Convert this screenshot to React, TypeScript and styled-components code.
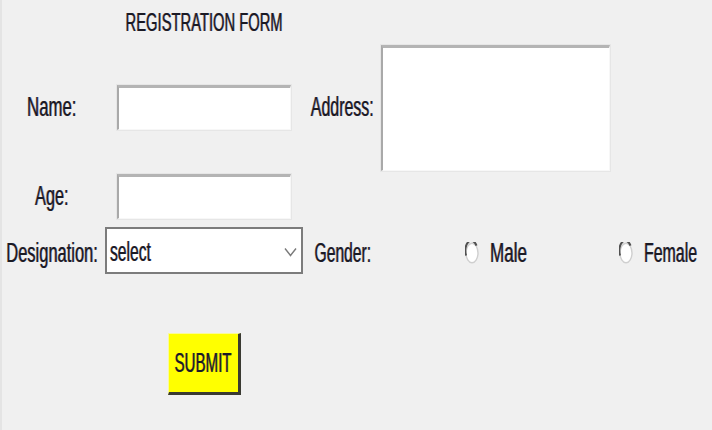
import React from "react";
import styled, { createGlobalStyle } from "styled-components";

const Global = createGlobalStyle`
  html, body { margin: 0; padding: 0; background: #f0f0f0; }
  body { font-family: "Liberation Sans", Arial, sans-serif; }
`;

const Window = styled.div`
  width: 712px;
  height: 430px;
  box-sizing: border-box;
  background: #f0f0f0;
  border-left: 2px solid #e4e4e4;
  overflow: hidden;
`;

const Form = styled.form`
  display: grid;
  margin-left: -2px;
  grid-template-columns: 104px 200px 77px 229px minmax(0, 1fr);
  grid-template-rows: 44px 127px 51px 56px 53px 66px;
`;

const Cell = styled.div<{ $col: number; $row: number; $pt?: number }>`
  grid-column: ${(p) => p.$col};
  grid-row: ${(p) => p.$row};
  display: flex;
  align-items: center;
  justify-content: center;
  min-width: 0;
  padding-top: ${(p) => p.$pt ?? 0}px;
`;

const Text = styled.span<{ $scale?: number; $size?: number; $origin?: string }>`
  display: inline-block;
  white-space: nowrap;
  font-family: "Liberation Sans", Arial, sans-serif;
  font-size: ${(p) => p.$size ?? 27}px;
  line-height: 1;
  color: #1a1a24;
  transform: scaleX(${(p) => p.$scale ?? 0.61});
  transform-origin: ${(p) => p.$origin ?? "center"};
  text-shadow: -0.9px 0 0 rgba(110, 60, 30, 0.45), 0.9px 0 0 rgba(30, 50, 140, 0.45);
`;

const Entry = styled.div<{ $w: number; $h: number }>`
  width: ${(p) => p.$w}px;
  height: ${(p) => p.$h}px;
  box-sizing: border-box;
  background: #ffffff;
  border-top: 3px solid #b4b4b4;
  border-left: 2px solid #a9a9a9;
  border-right: 1px solid #f7f7f7;
  border-bottom: 1px solid #f7f7f7;
  box-shadow: 0 0 0 1px #e6e6e6;
`;

const Combo = styled.div`
  width: 198px;
  height: 47px;
  box-sizing: border-box;
  background: #ffffff;
  border: 2px solid #7c7c7c;
  display: flex;
  align-items: center;
  justify-content: space-between;
  padding: 4px 4px 0 3px;
`;

const ComboValue = styled.div`
  flex: 1;
  overflow: visible;
`;

const RadioGroup = styled.label<{ $ml?: number }>`
  display: flex;
  align-items: center;
  gap: 11px;
  margin-left: ${(p) => p.$ml ?? 0}px;
`;

const RadioLabelBox = styled.span<{ $w: number }>`
  width: ${(p) => p.$w}px;
  display: flex;
  justify-content: flex-start;
`;

const SubmitButton = styled.button`
  width: 73px;
  height: 62px;
  box-sizing: border-box;
  background: #ffff00;
  border-top: 1px solid #fafa9a;
  border-left: 1px solid #fafa9a;
  border-right: 3px solid #3a3a32;
  border-bottom: 3px solid #3a3a32;
  padding: 0;
  display: flex;
  align-items: center;
  justify-content: center;
  cursor: pointer;
`;

const Chevron = () => (
  <svg width="13" height="10" viewBox="0 0 13 10">
    <path d="M1 1.5 L6.5 8.5 L12 1.5" fill="none" stroke="#7a7a7a" strokeWidth="1.4" />
  </svg>
);

const RadioMark = () => (
  <svg width="14" height="22" viewBox="0 0 14 22">
    <ellipse cx="7" cy="11" rx="6" ry="9.8" fill="#ffffff" stroke="#cfcfcf" strokeWidth="1.4" />
    <path d="M11.5 3.6 A6 9.8 0 0 0 1.1 13.5" fill="none" stroke="#505050" strokeWidth="2" />
  </svg>
);

export default function App() {
  return (
    <>
      <Global />
      <Window>
        <Form onSubmit={(e) => e.preventDefault()}>
          <Cell $col={2} $row={1}>
            <Text $size={25} $scale={0.59}>REGISTRATION FORM</Text>
          </Cell>

          <Cell $col={1} $row={2}>
            <Text $scale={0.62}>Name:</Text>
          </Cell>
          <Cell $col={2} $row={2}>
            <Entry $w={174} $h={45} />
          </Cell>
          <Cell $col={3} $row={2}>
            <Text $scale={0.59}>Address:</Text>
          </Cell>
          <Cell $col={4} $row={2}>
            <Entry $w={229} $h={126} />
          </Cell>

          <Cell $col={1} $row={3}>
            <Text $scale={0.6}>Age:</Text>
          </Cell>
          <Cell $col={2} $row={3}>
            <Entry $w={174} $h={45} />
          </Cell>

          <Cell $col={1} $row={4} $pt={6}>
            <Text $scale={0.61}>Designation:</Text>
          </Cell>
          <Cell $col={2} $row={4}>
            <Combo>
              <ComboValue>
                <Text $scale={0.58} $origin="left">select</Text>
              </ComboValue>
              <Chevron />
            </Combo>
          </Cell>
          <Cell $col={3} $row={4} $pt={6}>
            <Text $scale={0.58}>Gender:</Text>
          </Cell>
          <Cell $col={4} $row={4} $pt={6}>
            <RadioGroup>
              <RadioMark />
              <RadioLabelBox $w={37}>
                <Text $scale={0.63} $origin="left">Male</Text>
              </RadioLabelBox>
            </RadioGroup>
          </Cell>
          <Cell $col={5} $row={4} $pt={6}>
            <RadioGroup $ml={-6}>
              <RadioMark />
              <RadioLabelBox $w={53}>
                <Text $scale={0.59} $origin="left">Female</Text>
              </RadioLabelBox>
            </RadioGroup>
          </Cell>

          <Cell $col={2} $row={6}>
            <SubmitButton type="submit">
              <Text $scale={0.56} $size={27}>SUBMIT</Text>
            </SubmitButton>
          </Cell>
        </Form>
      </Window>
    </>
  );
}
